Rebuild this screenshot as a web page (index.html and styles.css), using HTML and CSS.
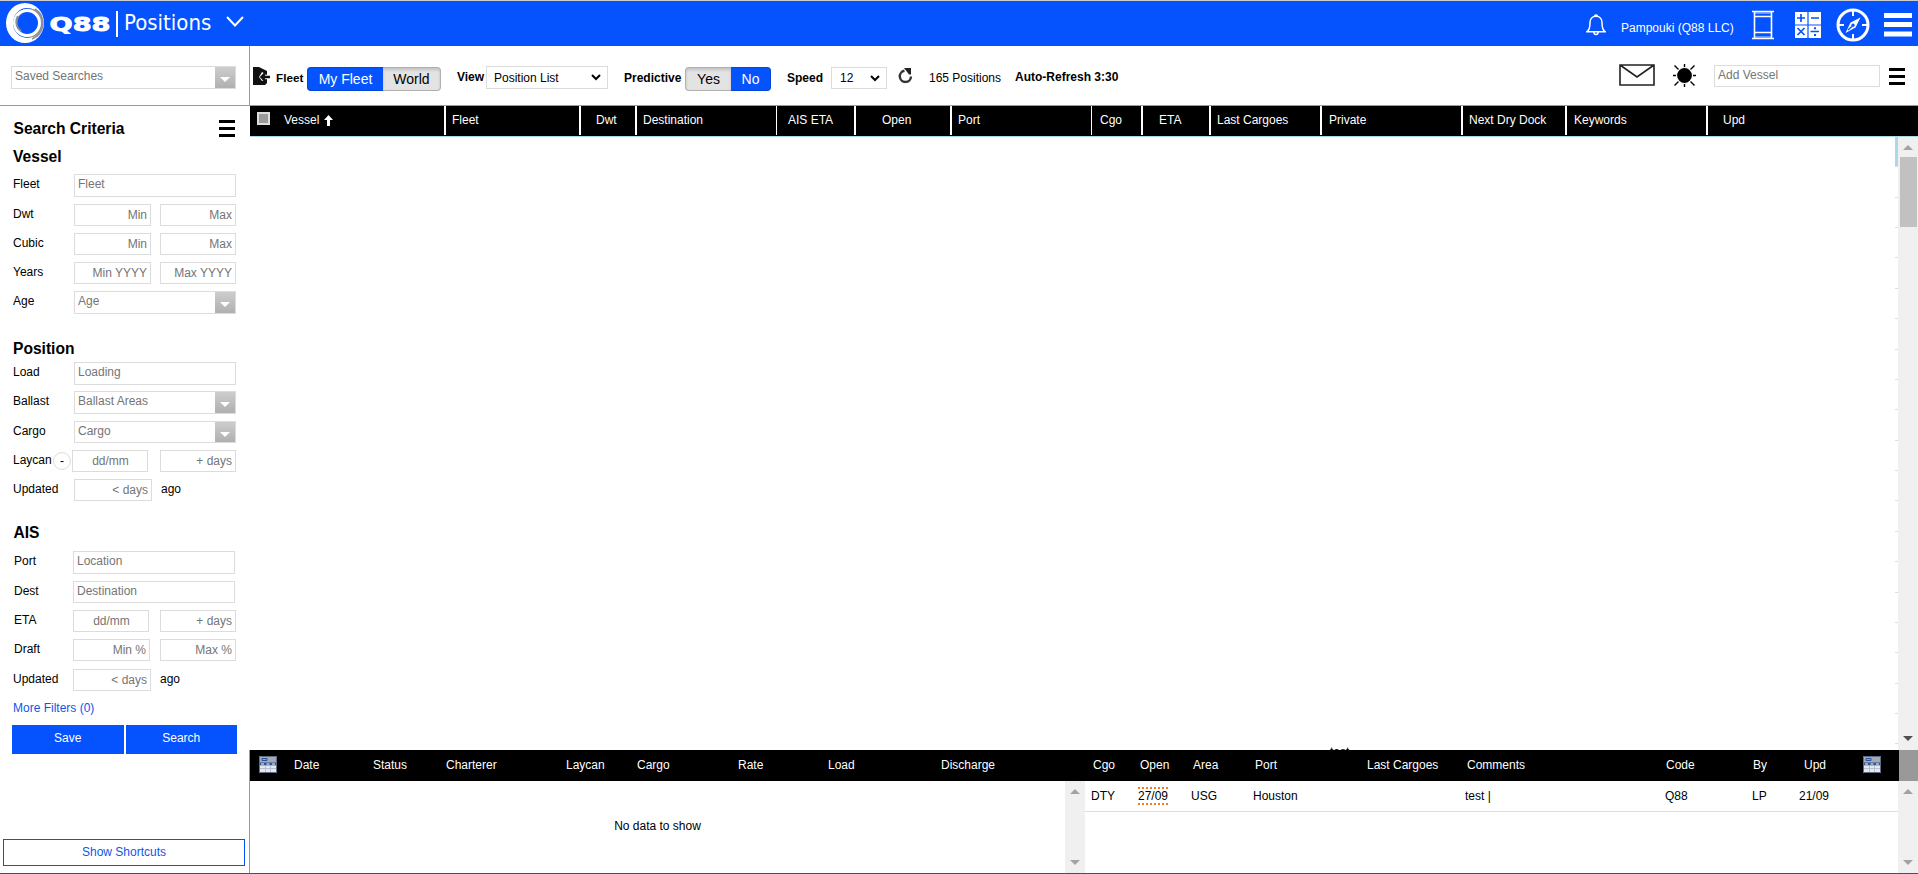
FILE: index.html
```
<!DOCTYPE html>
<html lang="en">
<head>
    <meta charset="UTF-8">
    <title>Q88 Positions</title>
    <link rel="stylesheet" href="styles.css">
</head>
<body>
    <header class="topbar">
        <svg class="logo" width="112" height="45" viewBox="0 0 112 45">
            <path fill="#fff" fill-rule="evenodd" d="M25 2a19 20 0 1 0 0 40a19 20 0 1 0 0-40zM27 7a14 15 0 1 1 0 30a14 15 0 1 1 0-30z"/>
            <circle cx="29" cy="22" r="13" fill="none" stroke="#8a8f99" stroke-width="3"/>
            <circle cx="27" cy="22" r="12.5" fill="none" stroke="#fff" stroke-width="3"/>
            <path d="M18 15a11 11 0 0 0 3 15M35 8a17 17 0 0 1-3 30" fill="none" stroke="#8a8f99" stroke-width="1.8"/>
            <text class="logo-text" x="49.500" y="30" textLength="61" lengthAdjust="spacingAndGlyphs">Q88</text>
        </svg>
        <span class="logo-line"></span>
        <span class="app-name">Positions</span>
        <svg class="app-arrow" width="18" height="12" viewBox="0 0 18 12"><path d="M1 1l8 8.500l8-8.500" fill="none" stroke="#fff" stroke-width="2"/></svg>
        <div class="topbar-right">
            <svg class="bell" width="20" height="22" viewBox="0 0 20 22" fill="none" stroke="#fff" stroke-width="1.500"><path d="M8.500 2.500a1.500 1.500 0 0 1 3 0M10 2.200c-4 0-6 3-6 6.500c0 5-1 7.500-3 9h18c-2-1.500-3-4-3-9c0-3.500-2-6.500-6-6.500zM8 18.500a2 2 0 0 0 4 0"/></svg>
            <span class="user">Pampouki (Q88 LLC)</span>
            <svg class="rail" width="22" height="30" viewBox="0 0 22 30" fill="none" stroke="#fff" stroke-width="1.600"><path d="M0 1.500h22M0 28.500h22M2.500 1v28M19.500 1v28M2 6.500h18M2 22.500h18"/><path d="M2 3h18M2 27h18" stroke-opacity=".5"/></svg>
            <svg class="calc" width="26" height="26" viewBox="0 0 26 26"><path fill="#fff" d="M0 0h12.400v12.400H0zM13.600 0H26v12.400H13.600zM0 13.600h12.400V26H0zM13.600 13.600H26V26H13.600z"/><path d="M2 6h8M6 2v8M16 6h8M2.500 16l7 7M9.500 16l-7 7M15.500 19.500h8.500" stroke="#0553ff" stroke-width="1.700"/><path fill="#0553ff" d="M19 15.200h2v2h-2zM19 22h2v2h-2z"/></svg>
            <svg class="compass" width="34" height="34" viewBox="0 0 34 34"><circle cx="17" cy="17" r="15" fill="none" stroke="#fff" stroke-width="3"/><path d="M17 3v5M17 26v5M3 17h5M26 17h5" stroke="#fff" stroke-width="2"/><path fill="#fff" fill-rule="evenodd" d="M24.500 9.500L19.500 19.500L9.500 25L14.500 14.500zM17 15.500a1.700 1.700 0 1 0 0 3.400a1.700 1.700 0 1 0 0-3.400z"/><path d="M16 18.500L12 22" stroke="#0553ff" stroke-width="1.500"/></svg>
            <svg class="main-menu" width="28" height="24" viewBox="0 0 28 24"><path fill="#fff" d="M0 0h28v5H0zM0 9h28v5H0zM0 18.500h28v5H0z"/></svg>
        </div>
    </header>

    <div class="page">
        <aside class="sidebar">
            <div class="saved">
                <div class="combo"><input type="text" placeholder="Saved Searches"><button class="drop"></button></div>
            </div>

            <div class="criteria-head">
                <h2>Search Criteria</h2>
                <svg width="16" height="17" viewBox="0 0 16 17"><path d="M0 0h16v3H0zM0 7h16v3H0zM0 14h16v3H0z"/></svg>
            </div>

            <h2 class="title-vessel">Vessel</h2>
            <div class="filters vessel">
                <div class="field"><label>Fleet</label><input class="wide" type="text" placeholder="Fleet"></div>
                <div class="field"><label>Dwt</label><input class="num" type="text" placeholder="Min"><input class="num last" type="text" placeholder="Max"></div>
                <div class="field"><label>Cubic</label><input class="num" type="text" placeholder="Min"><input class="num last" type="text" placeholder="Max"></div>
                <div class="field"><label>Years</label><input class="num" type="text" placeholder="Min YYYY"><input class="num last" type="text" placeholder="Max YYYY"></div>
                <div class="field"><label>Age</label><div class="combo"><input type="text" placeholder="Age"><button class="drop"></button></div></div>
            </div>

            <h2 class="title-position">Position</h2>
            <div class="filters position">
                <div class="field"><label>Load</label><input class="wide" type="text" placeholder="Loading"></div>
                <div class="field"><label>Ballast</label><div class="combo"><input type="text" placeholder="Ballast Areas"><button class="drop"></button></div></div>
                <div class="field"><label>Cargo</label><div class="combo short"><input type="text" placeholder="Cargo"><button class="drop"></button></div></div>
                <div class="field laycan"><label>Laycan</label><button class="minus">-</button><input class="num date" type="text" placeholder="dd/mm"><input class="num last" type="text" placeholder="+ days"></div>
                <div class="field"><label>Updated</label><input class="num days" type="text" placeholder="&lt; days"><span class="ago">ago</span></div>
            </div>

            <h2 class="title-ais">AIS</h2>
            <div class="filters ais">
                <div class="field"><label>Port</label><input class="wide" type="text" placeholder="Location"></div>
                <div class="field"><label>Dest</label><input class="wide short" type="text" placeholder="Destination"></div>
                <div class="field"><label>ETA</label><input class="num date" type="text" placeholder="dd/mm"><input class="num last" type="text" placeholder="+ days"></div>
                <div class="field"><label>Draft</label><input class="num" type="text" placeholder="Min %"><input class="num last" type="text" placeholder="Max %"></div>
                <div class="field"><label class="upd">Updated</label><input class="num days" type="text" placeholder="&lt; days"><span class="ago">ago</span></div>
            </div>

            <a class="more">More Filters (0)</a>
            <div class="actions">
                <button>Save</button>
                <button>Search</button>
            </div>
            <button class="shortcuts">Show Shortcuts</button>
        </aside>

        <main class="content">
            <div class="toolbar">
                <svg class="collapse" width="18" height="19" viewBox="0 0 18 19"><path fill="#111" d="M0 0h6l8 4v4L9 5L6 10l3 4l5-2v4l-2 2H0z"/><path d="M17 10H9M12 6.500L8.500 10l3.500 3.500" fill="none" stroke="#111" stroke-width="2.500"/></svg>
                <b class="t-fleet">Fleet</b>
                <div class="toggle fleet-toggle"><button class="on">My Fleet</button><button>World</button></div>
                <b class="t-view">View</b>
                <div class="select view-select"><span>Position List</span><svg width="10" height="7" viewBox="0 0 10 7"><path d="M1 1l4 4l4-4" fill="none" stroke="#000" stroke-width="2"/></svg></div>
                <b class="t-pred">Predictive</b>
                <div class="toggle pred-toggle"><button>Yes</button><button class="on">No</button></div>
                <b class="t-speed">Speed</b>
                <div class="select speed-select"><span>12</span><svg width="10" height="7" viewBox="0 0 10 7"><path d="M1 1l4 4l4-4" fill="none" stroke="#000" stroke-width="2"/></svg></div>
                <svg class="refresh" width="15" height="16" viewBox="0 0 15 16"><path d="M6.500 2.800A5.600 5.600 0 1 0 13 8.500" fill="none" stroke="#333" stroke-width="2.400"/><path d="M6 0h7v6.500H11z" fill="#222"/></svg>
                <span class="count">165 Positions</span>
                <b class="auto">Auto-Refresh 3:30</b>
                <div class="toolbar-right">
                    <svg width="36" height="22" viewBox="0 0 36 22"><path d="M1 1h34v20H1zL18 13L35 1" fill="none" stroke="#222" stroke-width="1.600"/></svg>
                    <svg class="sun" width="23" height="23" viewBox="0 0 23 23"><path d="M11.500 0v23M0 11.500h23M1.500 1.500l20 20M21.500 1.500l-20 20" stroke="#000" stroke-width="1.400"/><circle cx="11.500" cy="11.500" r="8" stroke="#fff" stroke-width="1.200"/></svg>
                    <input class="add-vessel" type="text" placeholder="Add Vessel">
                    <svg class="menu" width="16" height="17" viewBox="0 0 16 17"><path d="M0 0h16v3H0zM0 7h16v3H0zM0 14h16v3H0z"/></svg>
                </div>
            </div>

            <div class="grid-head">
                <div class="c-vessel"><span class="check"></span>Vessel<svg width="9" height="11" viewBox="0 0 9 11"><path fill="#fff" d="M4.500 0L9 5H6v6H3V5H0z"/></svg></div>
                <div>Fleet</div>
                <div class="c-dwt">Dwt</div>
                <div>Destination</div>
                <div class="c-aiseta">AIS ETA</div>
                <div class="c-open">Open</div>
                <div>Port</div>
                <div class="c-cgo">Cgo</div>
                <div class="c-eta">ETA</div>
                <div>Last Cargoes</div>
                <div class="c-wide">Private</div>
                <div>Next Dry Dock</div>
                <div class="c-wide">Keywords</div>
                <div class="c-upd">Upd</div>
            </div>

            <div class="grid-body">
                <div class="rows"><span class="cut">test</span></div>
                <div class="row-ends"></div>
                <div class="scroll main-scroll"><i class="up"></i><span class="thumb"></span><i class="down dark"></i></div>
            </div>

            <div class="details">
                <section class="fixtures">
                    <div class="detail-head">
                        <svg class="sheet" width="18" height="17" viewBox="0 0 18 17"><path fill="#a5a9b3" d="M0 0h18v17H0z"/><path fill="#2f5597" d="M0 6.500h18v3H0z"/><path fill="#e6e8ee" d="M1 9.500h16V16H1z"/><path fill="#fff" d="M2 7.500h3v1H2zM7.500 7.500h3v1h-3zM13 7.500h3v1h-3z"/><path fill="#7fa3d8" stroke="#2f5597" d="M3 2.500h5v2H3z"/><path d="M1 12.500h16M6.500 10v6M11.500 10v6" stroke="#b9bfcc"/><path fill="none" stroke="#5f6b85" d="M.5.5h17v16H.5z"/></svg>
                        <span>Date</span><span>Status</span><span>Charterer</span><span>Laycan</span><span>Cargo</span><span>Rate</span><span>Load</span><span>Discharge</span>
                    </div>
                    <div class="detail-body">
                        <p class="empty">No data to show</p>
                        <div class="scroll"><i class="up"></i><i class="down"></i></div>
                    </div>
                </section>
                <section class="opens">
                    <div class="detail-head">
                        <span>Cgo</span><span>Open</span><span>Area</span><span>Port</span><span>Last Cargoes</span><span>Comments</span><span>Code</span><span>By</span><span>Upd</span>
                        <svg class="sheet" width="18" height="17" viewBox="0 0 18 17"><path fill="#a5a9b3" d="M0 0h18v17H0z"/><path fill="#2f5597" d="M0 6.500h18v3H0z"/><path fill="#e6e8ee" d="M1 9.500h16V16H1z"/><path fill="#fff" d="M2 7.500h3v1H2zM7.500 7.500h3v1h-3zM13 7.500h3v1h-3z"/><path fill="#7fa3d8" stroke="#2f5597" d="M3 2.500h5v2H3z"/><path d="M1 12.500h16M6.500 10v6M11.500 10v6" stroke="#b9bfcc"/><path fill="none" stroke="#5f6b85" d="M.5.5h17v16H.5z"/></svg>
                        <span class="corner"></span>
                    </div>
                    <div class="detail-body">
                        <div class="open-rows">
                            <div class="open-row"><span>DTY</span><span><em>27/09</em></span><span>USG</span><span>Houston</span><span>test |</span><span>Q88</span><span>LP</span><span>21/09</span></div>
                        </div>
                        <div class="scroll"><i class="up"></i><i class="down"></i></div>
                    </div>
                </section>
            </div>
        </main>
    </div>
</body>
</html>
```
FILE: styles.css
```
* {
    box-sizing: border-box;
}
body {
    margin: 0;
    height: 874px;
    overflow: hidden;
    display: flex;
    flex-direction: column;
    font-family: Arial, "Liberation Sans", sans-serif;
    font-size: 12px;
    line-height: 14px;
    color: #000;
    background: #fff;
    border-bottom: 1px solid #0553ff;
}
svg {
    display: block;
    flex: none;
}
button, input {
    font: inherit;
    margin: 0;
}
h2 {
    margin: 0;
    font-size: 15.6px;
    line-height: 18px;
}

/* top bar */
.topbar {
    height: 46px;
    flex: none;
    display: flex;
    align-items: flex-start;
    background: #0553ff;
    border-top: 1px solid #ccc;
    color: #fff;
}
.logo-text {
    font: bold 19.5px "DejaVu Sans", sans-serif;
    fill: #fff;
    stroke: #fff;
    stroke-width: 0.8px;
}
.logo-line {
    width: 2px;
    height: 26px;
    margin: 10px 0 0 4px;
    background: #fff;
}
.app-name {
    width: 100px;
    margin: 8px 0 0 6px;
    font: 22px/27px "DejaVu Sans Condensed", "DejaVu Sans", sans-serif;
    font-stretch: condensed;
}
.app-arrow {
    margin: 15px 0 0 2px;
}
.topbar-right {
    margin: 0 6px 0 auto;
    height: 45px;
    display: flex;
    align-items: center;
}
.bell {
    margin-top: 3px;
}
.user {
    width: 131px;
    margin: 8px 0 0 15px;
}
.calc {
    margin: 2px 16px 0 21px;
}
.rail, .compass {
    margin-top: 3px;
}
.compass {
    margin-left: -1px;
    margin-right: 14px;
}
.main-menu {
    margin-top: 2px;
}

/* sidebar */
.page {
    flex: 1;
    display: flex;
    min-height: 0;
}
.sidebar {
    width: 249px;
    flex: none;
    display: flex;
    flex-direction: column;
}
.saved {
    height: 60px;
    flex: none;
    padding: 20px 13px 0 11px;
    border-bottom: 1px solid #999;
}
input {
    min-width: 0;
    height: 22px;
    padding: 0 3px;
    border: 1px solid #dcdcdc;
    background: #fff;
}
input::placeholder {
    color: #757575;
}
.combo {
    width: 162px;
    height: 23px;
    display: flex;
    border: 1px solid #dcdcdc;
}
.combo.short {
    height: 22px;
}
.saved .combo {
    width: 225px;
}
.combo input {
    flex: 1;
    height: 100%;
    border: 0;
    padding-bottom: 3px;
}
.drop {
    width: 20px;
    padding: 4px 0 0;
    border: 0;
    display: flex;
    align-items: center;
    justify-content: center;
    background: linear-gradient(#cdcdcd, #b0b0b0);
}
.drop::after {
    content: "";
    border: 5px solid transparent;
    border-top-color: #fff;
    border-bottom: 0;
}
.criteria-head {
    display: flex;
    justify-content: space-between;
    padding: 14px 14px 0 13.5px;
}
.title-vessel {
    margin: 10px 0 0 13px;
}
.filters {
    display: grid;
    margin-left: 13px;
}
.vessel {
    margin-top: 8px;
    grid-template-rows: 30px 29px 29px 29px 23px;
}
.position {
    margin-top: 4px;
    grid-template-rows: 29px 30px 29px 29px 22px;
}
.ais {
    margin-top: 9px;
    grid-template-rows: 30px 29px 29px 30px 22px;
}
.title-position {
    margin: 26px 0 0 13px;
}
.title-ais {
    margin: 23px 0 0 13.5px;
}
.field {
    display: flex;
    align-items: flex-start;
    width: 223px;
}
.field label {
    width: 61px;
    flex: none;
    padding-top: 3px;
}
.wide {
    width: 162px;
    height: 23px;
    padding-bottom: 3px;
}
.wide.short {
    height: 22px;
}
.num {
    width: 77px;
    padding: 0 3px 0 4px;
    text-align: right;
}
.num.last {
    width: 76px;
    margin-left: auto;
}
.num.days {
    width: 78px;
}
.num.date {
    width: 76px;
    text-align: center;
}
.ago {
    padding: 3px 0 0 9px;
}
.laycan label {
    width: 40px;
}
.minus {
    width: 18px;
    height: 18px;
    margin: 2px 1px 0 0;
    padding: 0;
    border: 1px solid #dcdcdc;
    border-radius: 50%;
    background: #fff;
    line-height: 14px;
}
.ais label {
    width: 60px;
    padding-left: 1px;
}
.ais .upd {
    padding-left: 0;
}
.more {
    margin: 10px 0 0 13px;
    color: #0f56e8;
}
.actions {
    display: flex;
    gap: 2px;
    margin: 10px 12px 0;
}
.actions button {
    flex: 1;
    height: 29px;
    padding: 0 0 4px;
    border: 0;
    background: #0553ff;
    color: #fff;
}
.shortcuts {
    width: 242px;
    height: 27px;
    margin: auto 0 7px 3px;
    padding: 0 0 2px;
    border: 1px solid #0553ff;
    background: #fff;
    color: #0f56e8;
}

/* toolbar */
.content {
    flex: 1;
    min-width: 0;
    display: flex;
    flex-direction: column;
}
.toolbar {
    height: 60px;
    flex: none;
    display: flex;
    align-items: flex-start;
    padding: 20px 13px 0 3px;
    border-left: 1px solid #999;
    border-bottom: 1px solid #999;
}
.toolbar b, .count {
    flex: none;
    padding-top: 4px;
}
.collapse {
    margin-top: 1px;
}
.toolbar .t-fleet {
    width: 31px;
    margin: 1px 0 0 5px;
    font-size: 11.7px;
}
.toggle {
    display: flex;
    height: 24px;
    margin-top: 1px;
}
.toggle button {
    padding: 0;
    border: 1px solid #b0b0b0;
    border-left: 0;
    border-radius: 0 4px 4px 0;
    font-size: 14px;
    background: #e3e3e3;
    box-shadow: inset 0 2px 3px rgba(0,0,0,0.15);
}
.toggle button:first-child {
    border-left: 1px solid #b0b0b0;
    border-right: 0;
    border-radius: 4px 0 0 4px;
}
.toggle .on, .toggle .on:first-child {
    background: #0553ff;
    border-color: #0446d6;
    box-shadow: none;
    color: #fff;
}
.fleet-toggle .on {
    width: 76px;
}
.fleet-toggle button:last-child {
    width: 58px;
}
.pred-toggle button {
    width: 46px;
}
.pred-toggle .on {
    width: 40px;
}
.t-view {
    width: 29px;
    margin-left: 16px;
}
.select {
    display: flex;
    align-items: center;
    justify-content: space-between;
    border: 1px solid #dcdcdc;
}
.view-select {
    width: 122px;
    height: 23px;
    padding: 0 6px 0 7px;
}
.speed-select {
    width: 56px;
    height: 22px;
    margin-top: 1px;
    padding: 0 6px 0 8px;
}
.t-pred {
    width: 61px;
    margin: 1px 0 0 16px;
}
.t-speed {
    width: 44px;
    margin: 1px 0 0 16px;
}
.refresh {
    margin: 2px 16px 0 11px;
}
.count {
    width: 86px;
    margin-top: 1px;
}
.toolbar-right {
    display: flex;
    align-items: flex-start;
    margin: -2px 0 0 auto;
}
.sun {
    margin: 0 18px;
}
.add-vessel {
    width: 166px;
    margin: 1px 9px 0 0;
    padding-bottom: 2px;
}
.menu {
    margin-top: 4px;
}

/* vessel grid */
.grid-head {
    display: grid;
    grid-template-columns: 194px 135px 56px 141px 78px 96px 141px 50px 68px 111px 141px 104px 141px 1fr;
    height: 30px;
    flex: none;
    margin-left: 1px;
    background: #000;
    color: #fff;
    line-height: 28px;
}
.grid-head div {
    height: 29px;
    padding-left: 6px;
    border-left: 2px solid #fff;
    white-space: nowrap;
}
.grid-head .c-vessel {
    display: flex;
    padding-left: 7px;
    border: 0;
}
.check {
    width: 13px;
    height: 13px;
    margin: 6px 14px 0 0;
    background: #999;
    border: 2px solid #ddd;
}
.c-vessel svg {
    margin: 9px 0 0 5px;
}
.grid-head .c-dwt {
    padding-left: 15px;
}
.grid-head .c-aiseta {
    padding-left: 11px;
    border-left-width: 1px;
}
.grid-head .c-open {
    padding-left: 26px;
}
.grid-head .c-cgo {
    padding-left: 8px;
    border-left-width: 1px;
}
.grid-head .c-eta {
    padding-left: 16px;
}
.grid-head .c-wide {
    padding-left: 7px;
}
.grid-head .c-upd {
    padding-left: 15px;
}
.grid-body {
    flex: 1;
    min-height: 0;
    margin-left: 1px;
    display: flex;
    border-top: 1px solid #add8e6;
}
.rows {
    flex: 1;
    display: flex;
    align-items: flex-end;
    overflow: hidden;
}
.cut {
    height: 5px;
    margin-left: 1080px;
}
.row-ends {
    width: 3px;
    background: linear-gradient(#add8e6, #add8e6) 0 0 / 3px 29px no-repeat, repeating-linear-gradient(#fff 0 29.37px, #ddd 29.37px 30.37px);
}
.scroll {
    width: 20px;
    flex: none;
    display: flex;
    flex-direction: column;
    align-items: center;
    padding: 8px 0;
    background: #f0f0f0;
}
.scroll i {
    border: 5px solid transparent;
}
.scroll .up {
    border-top: 0;
    border-bottom-color: #a3a3a3;
}
.scroll .down {
    margin-top: auto;
    border-bottom: 0;
    border-top-color: #a3a3a3;
}
.scroll .dark {
    border-top-color: #505050;
}
.main-scroll {
    padding-bottom: 9px;
}
.thumb {
    width: 17px;
    height: 70px;
    margin-top: 7px;
    margin-left: 1px;
    background: #c1c1c1;
}

/* bottom panels */
.details {
    height: 123px;
    flex: none;
    display: flex;
    border-left: 1px solid #999;
}
.fixtures {
    width: 835px;
    display: flex;
    flex-direction: column;
}
.opens {
    flex: 1;
    display: flex;
    flex-direction: column;
}
.detail-head {
    display: grid;
    height: 31px;
    flex: none;
    background: #000;
    color: #fff;
    line-height: 30px;
}
.fixtures .detail-head {
    grid-template-columns: 35px 79px 73px 120px 71px 101px 90px 113px 1fr;
    padding-left: 9px;
}
.opens .detail-head {
    grid-template-columns: 47px 53px 62px 112px 100px 199px 87px 51px 59px 36px 1fr;
    padding-left: 8px;
}
.sheet {
    margin-top: 6px;
}
.corner {
    background: #999;
}
.detail-body {
    flex: 1;
    display: flex;
}
.empty {
    flex: 1;
    margin: 38px 0 0;
    text-align: center;
}
.open-rows {
    flex: 1;
}
.open-row {
    display: grid;
    grid-template-columns: 47px 53px 62px 212px 200px 87px 47px 1fr;
    height: 31px;
    padding: 6px 0 0 6px;
    border-bottom: 1px solid #ddd;
}
.open-row em {
    display: inline-block;
    height: 18px;
    font-style: normal;
    border: dotted #f47b20;
    border-width: 2px 0;
}
.open-row span {
    padding-top: 2px;
}
.open-row span:nth-child(2) {
    padding-top: 0;
}
```
